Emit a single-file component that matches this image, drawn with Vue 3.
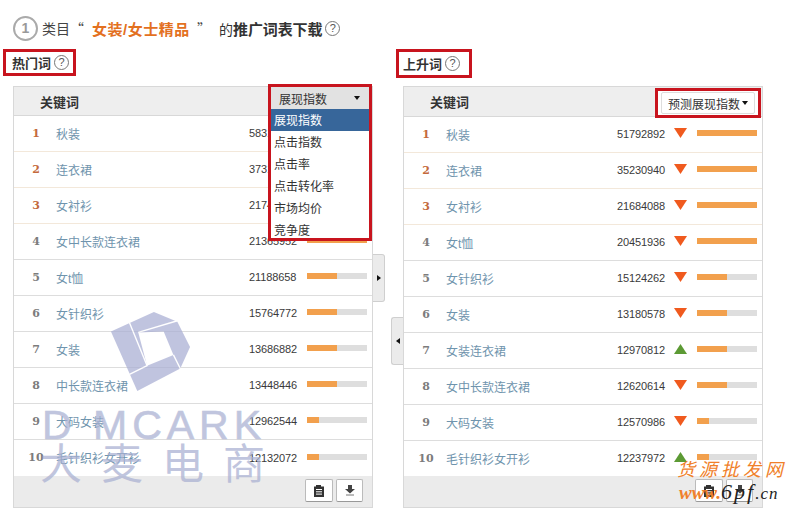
<script setup>
const panels = [
  {
    key: 'hot',
    title: '热门词',
    rows: [
      ['秋装', '58310272', 60], ['连衣裙', '37316420', 60], ['女衬衫', '21746088', 60],
      ['女中长款连衣裙', '21365952', 60], ['女t恤', '21188658', 30], ['女针织衫', '15764772', 30],
      ['女装', '13686882', 30], ['中长款连衣裙', '13448446', 30], ['大码女装', '12962544', 12],
      ['毛针织衫女开衫', '12132072', 12]
    ]
  },
  {
    key: 'rise',
    title: '上升词',
    rows: [
      ['秋装', '51792892', 60, 'down'], ['连衣裙', '35230940', 60, 'down'], ['女衬衫', '21684088', 60, 'down'],
      ['女t恤', '20451936', 60, 'down'], ['女针织衫', '15124262', 30, 'down'], ['女装', '13180578', 30, 'down'],
      ['女装连衣裙', '12970812', 30, 'up'], ['女中长款连衣裙', '12620614', 30, 'down'], ['大码女装', '12570986', 12, 'down'],
      ['毛针织衫女开衫', '12237972', 12, 'up']
    ]
  }
]
const menu = ['展现指数', '点击指数', '点击率', '点击转化率', '市场均价', '竞争度']
</script>

<template>
  <div class="page">
    <h1 class="title">
      <span class="step">1</span>
      <span class="t-a">类目<span class="q">“</span></span>
      <b class="t-cat">女装/女士精品</b>
      <span class="t-b q">”</span>
      <span class="t-c">的<b>推广词表下载</b></span>
      <span class="help big">?</span>
    </h1>

    <div class="columns">
      <section v-for="p in panels" :key="p.key" class="col" :class="p.key">
        <div class="heading-wrap">
          <h2 class="heading"><b>{{ p.title }}</b><span class="help">?</span></h2>
        </div>
        <div class="table">
          <div class="head">
            <b class="head-kw">关键词</b>
            <div v-if="p.key === 'hot'" class="callout select-callout">
              <div class="sel-btn"><span>展现指数</span><i class="caret"></i></div>
              <ul class="menu">
                <li v-for="(m, i) in menu" :key="m" :class="{ on: i === 0 }">{{ m }}</li>
              </ul>
            </div>
            <div v-else class="callout rise-callout">
              <div class="rise-btn">预测展现指数<i class="caret"></i></div>
            </div>
          </div>
          <div v-for="(r, i) in p.rows" :key="r[0]" class="row" :class="{ top: i < 3, last: i === 9 }">
            <span class="rank">{{ i + 1 }}</span>
            <span class="kw">{{ r[0] }}</span>
            <span class="num">{{ r[1] }}</span>
            <svg v-if="r[3]" class="trend" width="13" height="10" viewBox="0 0 13 10">
              <polygon v-if="r[3] === 'down'" points="0,0 13,0 6.5,10" fill="#f05a1e" />
              <polygon v-else points="0,10 13,10 6.5,0" fill="#5c9a34" />
            </svg>
            <span class="bar"><span class="fill" :style="{ width: r[2] + 'px' }"></span></span>
          </div>
          <div class="foot">
            <button class="tool">
              <svg width="10" height="12" viewBox="0 0 10 12">
                <path d="M0 1.5h2V0h5v1.5h3V12H0z" fill="#333" />
                <path d="M2 4.5h6M2 6.8h6M2 9.1h6" stroke="#fff" stroke-width="1" />
              </svg>
            </button>
            <button class="tool">
              <svg width="10" height="11" viewBox="0 0 10 11">
                <path d="M3 0h4v4h3L5 8.5 0 4h3z" fill="#444" />
                <path d="M1 10h8" stroke="#777" stroke-width="1" />
              </svg>
            </button>
          </div>
        </div>
      </section>
    </div>

    <div class="tab tab-r"><i class="tri-r"></i></div>
    <div class="tab tab-l"><i class="tri-l"></i></div>

    <div class="mark">
      <svg class="mark-logo" width="84" height="84" viewBox="108 310 86 86">
        <path fill-rule="evenodd" fill="#a9aed4" d="M155 312 179 322 192 348 182 370 138 393 111 332ZM139 333 165 332 175 356 148 367Z" />
        <path fill="none" stroke="#fff" stroke-width="1.4" d="M130 323 148 367 130 376M139 333 179 321M175 356 183 372" />
      </svg>
      <div class="mark-en">D MCARK</div>
      <div class="mark-cn">大麦电商</div>
    </div>

    <div class="site">
      <div class="site-cn">货源批发网</div>
      <div class="site-url"><span class="w">www.</span><span class="p">6pf</span><span class="c">.cn</span></div>
    </div>
  </div>
</template>

<style>
html, body { margin: 0; background: #fff; }
</style>

<style scoped>
.page {
  position: relative;
  width: 793px;
  height: 517px;
  overflow: hidden;
  background: #fff;
  color: #333;
  font-family: "Liberation Sans", "Noto Sans CJK SC", sans-serif;
  font-size: 12px;
}
.title {
  display: flex;
  align-items: center;
  height: 24px;
  margin: 0;
  padding: 16px 0 0 13px;
  font-size: 14px;
  font-weight: 400;
  color: #444;
}
.step {
  box-sizing: border-box;
  flex: none;
  width: 25px;
  height: 25px;
  margin-right: 4px;
  border: 2px solid #aaa;
  border-radius: 50%;
  color: #999;
  font: bold 14px/21px "Liberation Sans", sans-serif;
  text-align: center;
}
.q { font-family: "Noto Sans CJK SC", sans-serif; }
.t-a { width: 43px; white-space: nowrap; }
.t-cat { width: 98px; margin-left: 7px; color: #e3711f; font-size: 15px; letter-spacing: 0.5px; white-space: nowrap; }
.t-b { width: 22px; margin-left: 7px; }
.t-c { white-space: nowrap; color: #333; }
.t-c b { color: #333; font-size: 15px; letter-spacing: -0.1px; }
.help {
  box-sizing: border-box;
  display: inline-block;
  flex: none;
  width: 15px;
  height: 15px;
  margin-left: 3px;
  border: 1px solid #777;
  border-radius: 50%;
  color: #555;
  font: 11px/13px "Liberation Sans", sans-serif;
  text-align: center;
}
.columns {
  display: flex;
  gap: 30px;
  padding: 9px 0 0 13px;
}
.col { width: 360px; }
.heading-wrap { display: flex; height: 37px; align-items: flex-start; margin-left: -10px; }
.rise .heading-wrap { margin-left: -7px; }
.heading {
  box-sizing: border-box;
  display: flex;
  align-items: center;
  width: 73px;
  height: 27px;
  margin: 0;
  padding-left: 6px;
  border: 3px solid #c8141e;
  font-size: 13px;
  font-weight: 400;
  color: #333;
}
.rise .heading { width: 76px; height: 29px; padding-left: 4px; }
.table {
  width: 360px;
  height: 422px;
  box-sizing: border-box;
  border: 1px solid #d8d8d8;
  display: flex;
  flex-direction: column;
  background: #fff;
}
.head {
  position: relative;
  display: flex;
  align-items: center;
  flex: none;
  height: 28px;
  padding-left: 26px;
  background: #eee;
  border-bottom: 1px solid #d8d8d8;
}
.rise .head { height: 29px; }
.head-kw { font-size: 13px; color: #333; }
.callout {
  position: absolute;
  box-sizing: border-box;
  border: 3px solid #c8141e;
  z-index: 5;
}
.select-callout { left: 254px; top: -3px; width: 104px; height: 157px; background: #fff; }
.sel-btn {
  display: flex;
  align-items: center;
  justify-content: space-between;
  height: 22px;
  padding: 0 9px 0 8px;
  background: #e2e2e2;
  color: #333;
}
.caret {
  display: inline-block;
  width: 0;
  height: 0;
  border: 3px solid transparent;
  border-top: 4px solid #111;
  border-bottom: 0;
}
.menu { margin: 0; padding: 0; list-style: none; }
.menu li { height: 22px; line-height: 24px; padding-left: 3px; color: #333; }
.menu li.on { background: #37669a; color: #fff; }
.rise-callout { left: 251px; top: 1px; width: 106px; height: 30px; background: #fff; padding: 1px 3px; }
.rise-btn {
  box-sizing: border-box;
  display: flex;
  align-items: center;
  justify-content: center;
  gap: 2px;
  height: 22px;
  border: 1px solid #ddd;
  border-radius: 2px;
  color: #333;
}
.row {
  display: flex;
  align-items: center;
  flex: none;
  height: 36px;
  box-sizing: border-box;
  border-bottom: 1px solid #ddd;
}
.row.top { border-bottom-color: #f3e8da; }
.row.last { border-bottom: 0; }
.rise .row.last { height: 35px; }
.rank {
  flex: none;
  width: 30px;
  margin: 0 5px 0 7px;
  text-align: center;
  font: bold 11px/14px "DejaVu Serif", serif;
  color: #7c7c7c;
}
.top .rank { color: #c46a3c; }
.kw { flex: 1; color: #6f94ad; margin-top: -1px; }
.num {
  width: 48px;
  color: #3a3a3a;
  font-size: 11px;
  letter-spacing: -0.1px;
  white-space: nowrap;
  margin-top: -1px;
}
.hot .num { margin-right: 10px; }
.trend { flex: none; margin: -4px 10px 0 9px; }
.bar {
  flex: none;
  width: 60px;
  height: 6px;
  margin: -3px 5px 0 0;
  background: #dedede;
  display: block;
}
.fill { display: block; height: 100%; background: #f2a04d; }
.foot {
  flex: 1;
  display: flex;
  justify-content: flex-end;
  align-items: flex-start;
  gap: 3px;
  padding: 3px 9px 0 0;
  background: #ebebeb;
}
.tool {
  box-sizing: border-box;
  display: flex;
  align-items: center;
  justify-content: center;
  width: 28px;
  height: 23px;
  padding: 0;
  background: #fff;
  border: 1px solid #bbb;
  border-bottom-color: #999;
  border-radius: 2px;
}
.tool:last-child { width: 27px; }
.tab {
  position: absolute;
  box-sizing: border-box;
  display: flex;
  align-items: center;
  width: 12px;
  height: 48px;
  background: #ebebeb;
  border: 1px solid #cfcfcf;
}
.tab-r { left: 373px; top: 254px; border-left: 0; border-radius: 0 3px 3px 0; justify-content: center; }
.tab-l { left: 391px; top: 317px; border-right: 0; border-radius: 3px 0 0 3px; justify-content: center; }
.tri-r { border: 3.5px solid transparent; border-left: 4px solid #111; border-right: 0; }
.tri-l { border: 3.5px solid transparent; border-right: 4px solid #111; border-left: 0; }
.mark {
  position: absolute;
  left: 40px;
  top: 310px;
  width: 240px;
  height: 180px;
  pointer-events: none;
  opacity: 0.72;
}
.mark-logo { position: absolute; left: 68px; top: 0; }
.mark-en {
  position: absolute;
  left: 2px;
  top: 92px;
  font: 41px/46px "Liberation Sans", sans-serif;
  letter-spacing: 5px;
  color: #a9b0d2;
  -webkit-text-stroke: 0.6px #a9b0d2;
  white-space: pre;
}
.mark-cn {
  position: absolute;
  left: 0;
  top: 126px;
  font: 42px/50px "Noto Sans CJK SC", sans-serif;
  letter-spacing: 19px;
  color: #a9b0d2;
  white-space: nowrap;
}
.site {
  position: absolute;
  left: 677px;
  top: 457px;
  width: 112px;
  pointer-events: none;
}
.site-cn {
  font: italic 18px/22px "Noto Sans CJK SC", sans-serif;
  letter-spacing: 4px;
  color: #f0802a;
  white-space: nowrap;
}
.site-url { font: italic 18px/26px "Liberation Serif", serif; white-space: nowrap; padding-left: 2px; }
.w { color: #f0802a; font-size: 19px; font-weight: 700; letter-spacing: 0; }
.p { color: #222; font-size: 22px; letter-spacing: 2px; }
.c { color: #222; font-size: 17px; letter-spacing: 1px; }
</style>
